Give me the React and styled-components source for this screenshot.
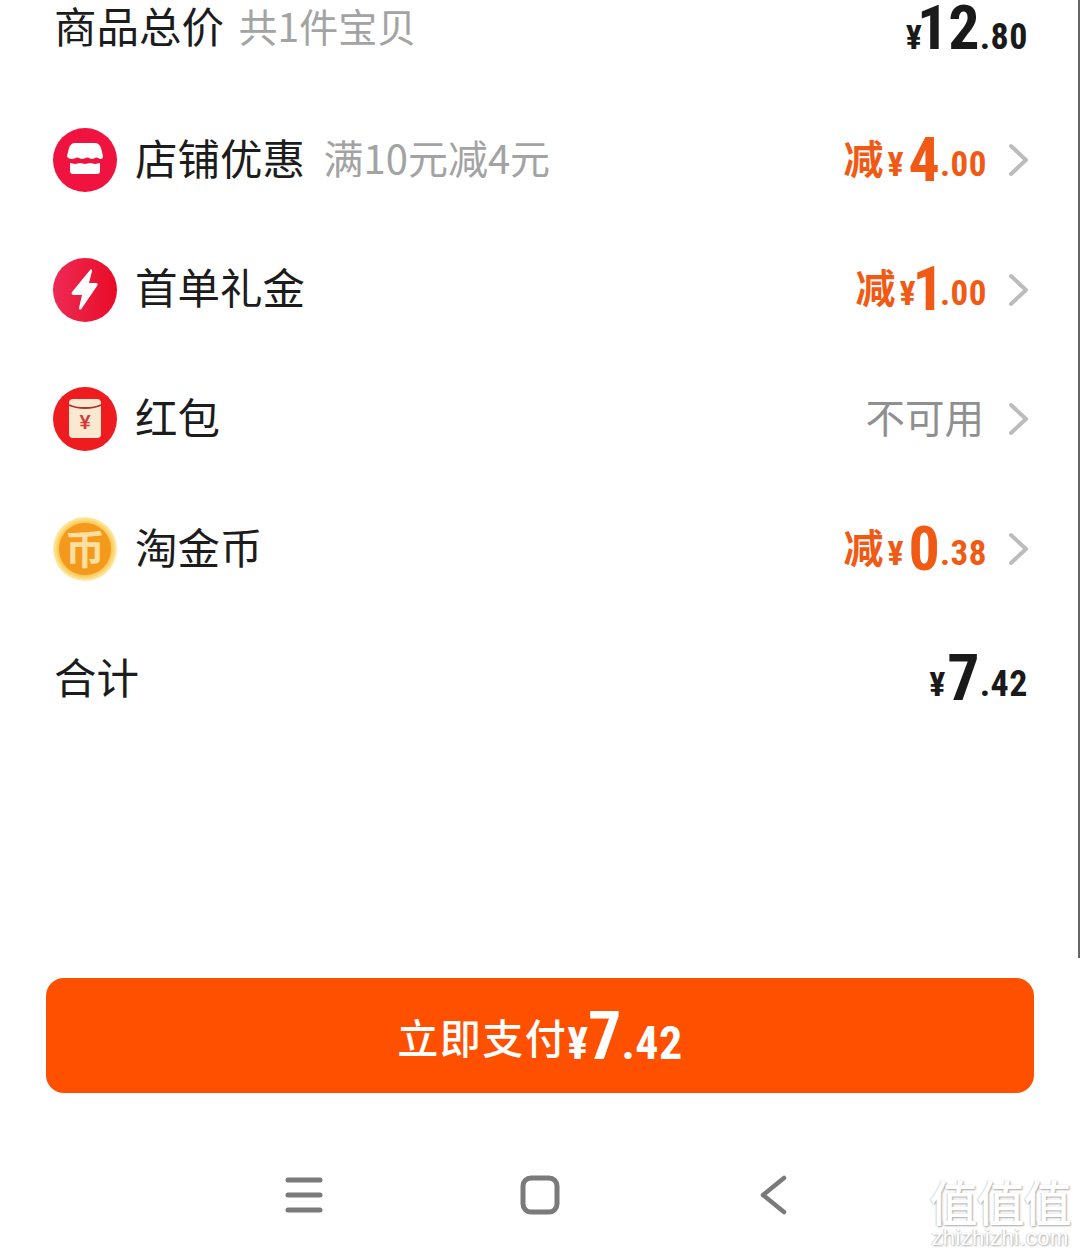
import React from "react";
import styled, { createGlobalStyle } from "styled-components";

const GlobalStyle = createGlobalStyle`
  html, body {
    margin: 0;
    padding: 0;
    background: #fff;
  }
  body {
    font-family: "Noto Sans CJK SC", "Liberation Sans", sans-serif;
    overflow: hidden;
  }
`;

const NUMBER_FONT = `"Liberation Sans Narrow", "Roboto Condensed", "Liberation Sans", sans-serif`;

const Page = styled.div`
  position: relative;
  width: 1080px;
  height: 1257px;
  overflow: hidden;
  background: #fff;
  display: flex;
  flex-direction: column;
`;

const EdgeLine = styled.div`
  position: absolute;
  top: 0;
  right: 0;
  width: 2px;
  height: 958px;
  background: #666;
`;

const Summary = styled.section`
  height: 978px;
  padding: 0 52px 0 54px;
  box-sizing: border-box;
  display: flex;
  flex-direction: column;
`;

const Row = styled.div`
  display: flex;
  align-items: center;
  height: ${(p) => p.$h}px;
  margin-bottom: ${(p) => p.$mb || 0}px;
`;

const IconSlot = styled.div`
  width: 64px;
  height: 64px;
  margin: 0 18px 0 -1px;
  flex-shrink: 0;
  svg {
    display: block;
  }
`;

const Label = styled.span`
  font-size: 42.5px;
  line-height: 1;
  margin-bottom: 6px;
  color: #1c1c1c;
  font-weight: 400;
`;

const Hint = styled.span`
  font-size: ${(p) => p.$size || 39}px;
  line-height: 1;
  margin-left: ${(p) => p.$ml || 0}px;
  margin-bottom: 6px;
  color: #a3a3a3;
  white-space: nowrap;
`;

const Unavailable = styled(Hint)`
  margin-left: auto;
  margin-right: 3px;
  color: #8f8f8f;
`;

const Value = styled.div`
  margin-left: auto;
  margin-top: ${(p) => p.$drop || 0}px;
  color: ${(p) => p.$color || "#1a1a1a"};
  white-space: nowrap;
  line-height: 60px;
`;

const Off = styled.span`
  font-size: 40px;
  font-weight: 700;
  line-height: 1;
  margin-right: 4px;
  vertical-align: 7px;
`;

const Yen = styled.span`
  font-family: ${NUMBER_FONT};
  font-weight: 700;
  font-size: ${(p) => p.$size}px;
  margin-right: ${(p) => p.$mr || 0}px;
  vertical-align: ${(p) => p.$raise || 0}px;
  line-height: 1;
`;

const Big = styled.span`
  font-family: ${NUMBER_FONT};
  font-weight: 700;
  font-size: ${(p) => p.$size}px;
  margin-left: ${(p) => p.$trimLeft || 0}px;
  margin-right: ${(p) => p.$trimRight || 0}px;
  vertical-align: ${(p) => p.$raise || 0}px;
  line-height: 1;
`;

const Small = styled.span`
  font-family: ${NUMBER_FONT};
  font-weight: 700;
  font-size: ${(p) => p.$size}px;
  letter-spacing: 0.5px;
  vertical-align: ${(p) => p.$raise || 0}px;
  line-height: 1;
`;

const Chevron = styled.svg`
  width: 20px;
  height: 34px;
  margin-left: 21px;
  flex-shrink: 0;
  fill: none;
  stroke: #bcbcbc;
  stroke-width: 4;
  stroke-linecap: round;
  stroke-linejoin: round;
`;

const PayButton = styled.button`
  align-self: center;
  box-sizing: border-box;
  width: 988px;
  height: 115px;
  border: 0;
  border-radius: 18px;
  padding: 25px 0 0;
  background: #ff5000;
  color: #fff;
  display: block;
  text-align: center;
  line-height: 79px;
  font-family: inherit;
  flex-shrink: 0;
`;

const PayText = styled.span`
  font-size: 41px;
  font-weight: 500;
  letter-spacing: 1.5px;
  line-height: 1;
  vertical-align: 5px;
`;

const NavBar = styled.nav`
  flex: 1;
  position: relative;
  display: flex;
  align-items: flex-start;
  padding-top: 82px;
  box-sizing: border-box;
  padding-left: 285px;
`;

const NavIcon = styled.svg`
  display: block;
  margin: ${(p) => p.$mt || 0}px 0 0 ${(p) => p.$ml || 0}px;
  fill: none;
  stroke: #7a7a7a;
  stroke-width: ${(p) => p.$stroke}px;
  stroke-linecap: round;
  stroke-linejoin: round;
`;

// site watermark sitting over the bottom right corner
const Mark = styled.div`
  position: absolute;
  right: 8px;
  bottom: 8px;
  width: 144px;
  text-align: center;
  color: #fff;
  text-shadow: 1px 1px 2px #a8a8a8, -1px 0 1px #d8d8d8;
  line-height: 1;
`;

const MarkGlyphs = styled.div`
  font-size: 48px;
  font-weight: 500;
  letter-spacing: -1px;
  white-space: nowrap;
`;

const MarkSite = styled.div`
  font-family: "Liberation Sans", sans-serif;
  font-size: 22px;
  margin-top: 3px;
  letter-spacing: 0.4px;
  white-space: nowrap;
`;

const ShopIcon = () => (
  <svg width="64" height="64" viewBox="0 0 64 64">
    <circle cx="32" cy="32" r="32" fill="#f0123f" />
    <path
      d="M22 15h20c3 0 5 2 6 5l2 8c0 2-1 3-2 3-2 0-3-1.500-4.500-1.500S41 31 39 31s-3-1.500-4.500-1.500S31 31 29 31s-3-1.500-4.500-1.500S21 31 19 31c-2 0-5-1-5-3l2-8c1-3 3-5 6-5z"
      fill="#fff"
    />
    <path d="M17 35c2 0 3 1 5 1s3-1 5-1 3 1 5 1 3-1 5-1 3 1 5 1 3-1 5-1v8c0 2-1 3-3 3H20c-2 0-3-1-3-3z" fill="#fff" />
  </svg>
);

const BoltIcon = () => (
  <svg width="64" height="64" viewBox="0 0 64 64">
    <defs>
      <linearGradient id="boltFill" x1="0" y1="0" x2="1" y2="0">
        <stop offset="0" stopColor="#ee2a55" />
        <stop offset="1" stopColor="#e80c26" />
      </linearGradient>
    </defs>
    <circle cx="32" cy="32" r="32" fill="url(#boltFill)" />
    <path
      d="M37 12c1-1 2-1 2 1l-3 12h7c2 0 2 1 1 3L29 50c-1 2-3 2-3 0l3-13h-8c-2 0-3-1-2-3z"
      fill="#fff"
    />
  </svg>
);

const PacketGlyph = styled.text`
  font-family: "Liberation Sans", sans-serif;
  font-weight: 700;
  font-size: 20px;
  fill: #d43a3a;
`;

const PacketIcon = () => (
  <svg width="64" height="64" viewBox="0 0 64 64">
    <circle cx="32" cy="32" r="32" fill="#ee1b1f" />
    <rect x="16" y="12" width="32" height="39" rx="4" fill="#fbe8d0" />
    <path d="M16 18c8 4 24 4 32 0" stroke="#b03030" strokeWidth="1.8" fill="none" />
    <PacketGlyph x="32" y="42" textAnchor="middle">¥</PacketGlyph>
  </svg>
);

const CoinGlyph = styled.text`
  font-family: "Noto Sans CJK SC", sans-serif;
  font-weight: 700;
  font-size: 40px;
  fill: #fddf9f;
`;

const CoinIcon = () => (
  <svg width="64" height="64" viewBox="0 0 64 64">
    <defs>
      <radialGradient id="coinRim">
        <stop offset="0.8" stopColor="#f8c24a" />
        <stop offset="1" stopColor="#fdeea8" />
      </radialGradient>
    </defs>
    <circle cx="32" cy="32" r="32" fill="url(#coinRim)" />
    <circle cx="32" cy="32" r="26" fill="#f5991c" />
    <CoinGlyph x="32" y="47" textAnchor="middle">币</CoinGlyph>
  </svg>
);

const Arrow = () => (
  <Chevron viewBox="0 0 20 34">
    <path d="M3 3l15 14L3 31" />
  </Chevron>
);

const ORANGE = "#f05a14";

const Discount = ({ whole, cents, trimLeft, trimRight }) => (
  <Value $color={ORANGE} $drop={12}>
    <Off>减</Off>
    <Yen $size={34} $mr={5} $raise={5}>¥</Yen>
    <Big $size={62} $trimLeft={trimLeft} $trimRight={trimRight}>{whole}</Big>
    <Small $size={35} $raise={5}>.{cents}</Small>
  </Value>
);

export default function App() {
  return (
    <Page>
      <GlobalStyle />
      <EdgeLine />
      <Summary>
        <Row $h={56} $mb={39}>
          <Label>商品总价</Label>
          <Hint $ml={14.5}>共1件宝贝</Hint>
          <Value $drop={12}>
            <Yen $size={34} $mr={-5}>¥</Yen>
            <Big $size={62}>12</Big>
            <Small $size={36}>.80</Small>
          </Value>
        </Row>
        <Row $h={130}>
          <IconSlot><ShopIcon /></IconSlot>
          <Label>店铺优惠</Label>
          <Hint $ml={18.5} $size={40}>满10元减4元</Hint>
          <Discount whole="4" cents="00" />
          <Arrow />
        </Row>
        <Row $h={129}>
          <IconSlot><BoltIcon /></IconSlot>
          <Label>首单礼金</Label>
          <Discount whole="1" cents="00" trimLeft={-8} trimRight={-4} />
          <Arrow />
        </Row>
        <Row $h={130}>
          <IconSlot><PacketIcon /></IconSlot>
          <Label>红包</Label>
          <Unavailable $size={39.5}>不可用</Unavailable>
          <Arrow />
        </Row>
        <Row $h={130}>
          <IconSlot><CoinIcon /></IconSlot>
          <Label>淘金币</Label>
          <Discount whole="0" cents="38" />
          <Arrow />
        </Row>
        <Row $h={130}>
          <Label>合计</Label>
          <Value $drop={12}>
            <Yen $size={34} $mr={2} $raise={4}>¥</Yen>
            <Big $size={64}>7</Big>
            <Small $size={36} $raise={4}>.42</Small>
          </Value>
        </Row>
      </Summary>
      <PayButton>
        <PayText>立即支付</PayText>
        <Yen $size={44}>¥</Yen>
        <Big $size={66}>7</Big>
        <Small $size={46}>.42</Small>
      </PayButton>
      <NavBar>
        <NavIcon width="38" height="38" viewBox="0 0 38 38" $stroke={5} $mt={2}>
          <path d="M3 3h32M3 18h32M3 33h32" />
        </NavIcon>
        <NavIcon width="40" height="40" viewBox="0 0 40 40" $stroke={5} $ml={197}>
          <rect x="3" y="3" width="34" height="34" rx="8" />
        </NavIcon>
        <NavIcon width="28" height="40" viewBox="0 0 28 40" $stroke={4.5} $ml={199}>
          <path d="M25 3L4 20l21 17" />
        </NavIcon>
        <Mark>
          <MarkGlyphs>值值值</MarkGlyphs>
          <MarkSite>zhizhizhi.com</MarkSite>
        </Mark>
      </NavBar>
    </Page>
  );
}
